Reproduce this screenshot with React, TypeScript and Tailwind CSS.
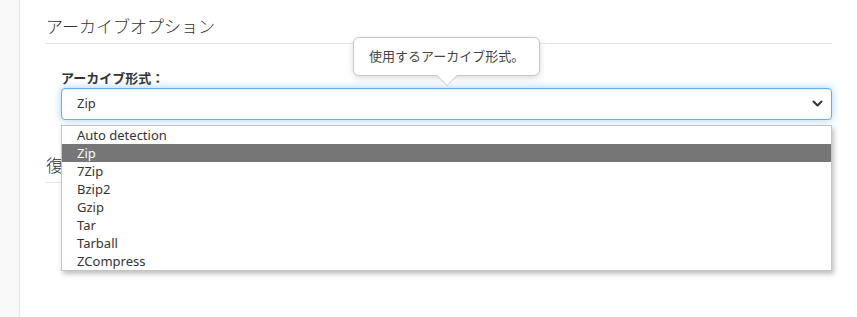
import { useState } from 'react'

const FORMATS = [
  'Auto detection',
  'Zip',
  '7Zip',
  'Bzip2',
  'Gzip',
  'Tar',
  'Tarball',
  'ZCompress',
]

const FONT = '"Noto Sans", "Noto Sans CJK JP", sans-serif'

function Tooltip({ text }: { text: string }) {
  return (
    <div className="absolute left-[353px] top-[37px] z-20">
      <div className="relative rounded-[6px] border border-[#c8c8c8] bg-white px-[15px] h-[39px] flex items-center text-[13px] text-[#444] shadow-[0_2px_6px_rgba(0,0,0,0.15)] whitespace-nowrap">
        {text}
        {/* arrow */}
        <span className="absolute left-1/2 -bottom-[11px] -translate-x-1/2 w-0 h-0 border-x-[11px] border-x-transparent border-t-[11px] border-t-[#c8c8c8]" />
        <span className="absolute left-1/2 -bottom-[10px] -translate-x-1/2 w-0 h-0 border-x-[10px] border-x-transparent border-t-[10px] border-t-white" />
      </div>
    </div>
  )
}

function SectionHeading({ children }: { children: string }) {
  return (
    <div className="pt-[15px] pb-[4px] border-b border-[#e5e5e5] text-[17px] leading-[24px] text-[#333] font-light">
      {children}
    </div>
  )
}

export default function App() {
  const [selected] = useState('Zip')

  return (
    <div className="relative flex w-[857px] h-[317px] bg-white overflow-hidden" style={{ fontFamily: FONT }}>
      <div className="w-[20px] shrink-0 bg-[#f9f9f9] border-r border-[#e4e4e4]" />
      <div className="flex-1 flex flex-col pl-[26px] pr-[25px]">
        <SectionHeading>アーカイブオプション</SectionHeading>

        <div className="relative flex flex-col gap-[1px] pt-[25px] pl-[15px]">
          <label className="text-[13px] leading-[18px] font-bold text-[#333]">
            アーカイブ形式：
          </label>
          <div className="relative h-[32px] rounded-[4px] border border-[#66afe9] bg-white flex items-center justify-between pl-[15px] pr-[8px] text-[13px] text-[#333] shadow-[inset_0_1px_1px_rgba(0,0,0,0.075),0_0_8px_rgba(102,175,233,0.6)]">
            <span>{selected}</span>
            <svg width="11" height="8" viewBox="0 0 11 8" fill="none">
              <path d="M1.5 1.5 L5.5 5.5 L9.5 1.5" stroke="#333" strokeWidth="2" strokeLinecap="round" strokeLinejoin="round" />
            </svg>
          </div>

          {/* open dropdown list */}
          <ul className="absolute left-[15px] right-0 top-[81px] z-10 bg-white border border-[#c4c4c4] shadow-[2px_3px_5px_rgba(0,0,0,0.25)]">
            {FORMATS.map(f => (
              <li
                key={f}
                className={`h-[18px] leading-[18px] pl-[15px] text-[13px] ${
                  f === selected ? 'bg-[#767676] text-white' : 'text-[#333]'
                }`}
              >
                {f}
              </li>
            ))}
          </ul>
        </div>

        <div className="mt-[19px]">
          <SectionHeading>復元オプション</SectionHeading>
        </div>
      </div>

      <Tooltip text="使用するアーカイブ形式。" />
    </div>
  )
}
